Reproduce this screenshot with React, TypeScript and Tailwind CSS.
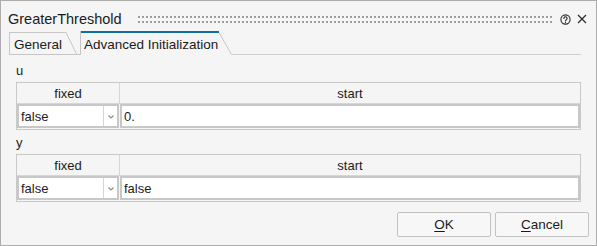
import React from 'react';

const HelpIcon = () => (
  <svg width="11" height="11" viewBox="0 0 11 11" className="block">
    <circle cx="5.5" cy="5.5" r="4.6" fill="none" stroke="#2a2a2a" strokeWidth="1.1" />
    <path d="M3.9 4.4 a1.6 1.6 0 1 1 2.5 1.3 c-0.6 0.35 -0.9 0.6 -0.9 1.2" fill="none" stroke="#2a2a2a" strokeWidth="1.1" strokeLinecap="round" />
    <circle cx="5.5" cy="8.3" r="0.65" fill="#2a2a2a" />
  </svg>
);

const CloseIcon = () => (
  <svg width="10" height="10" viewBox="0 0 10 10" className="block">
    <path d="M1 1 L9 9 M9 1 L1 9" stroke="#2a2a2a" strokeWidth="1.2" />
  </svg>
);

const Grip = () => (
  <svg height="8" className="block w-full">
    <defs>
      <pattern id="grip" width="4" height="8" patternUnits="userSpaceOnUse">
        <rect x="0" y="0" width="2" height="2" fill="#9d9d9d" />
        <rect x="0" y="5" width="2" height="2" fill="#9d9d9d" />
      </pattern>
    </defs>
    <rect width="100%" height="8" fill="url(#grip)" />
  </svg>
);

const Chevron = () => (
  <svg width="6" height="4" viewBox="0 0 6 4" className="block">
    <path d="M0.5 0.5 L3 3 L5.5 0.5" fill="none" stroke="#8c8c8c" strokeWidth="1.1" />
  </svg>
);

const VarTable = ({ value }: { value: string }) => (
  <div className="border border-[#c9c9c9] flex flex-col">
    <div className="grid grid-cols-[103px_1fr] h-[21px] border-b border-[#d6d6d6]">
      <div className="border-r border-[#d6d6d6] flex items-center justify-center">fixed</div>
      <div className="flex items-center justify-center">start</div>
    </div>
    <div className="flex gap-px h-[25px] pb-px">
      <div className="w-[102px] border-2 border-[#c8c8c8] bg-white flex">
        <div className="flex-1 flex items-center pl-[2px]">false</div>
        <div className="w-px bg-[#d4d4d4]" />
        <div className="w-[13px] flex items-center justify-center pt-px">
          <Chevron />
        </div>
      </div>
      <div className="flex-1 border-2 border-[#c8c8c8] bg-white flex items-center pl-[2px]">{value}</div>
    </div>
  </div>
);

export default function App() {
  return (
    <div className="w-[597px] h-[246px] bg-[#f5f5f5] border border-[#adadad] font-['Liberation_Sans',sans-serif] text-[13px] leading-[15px] text-[#1b1b1b] flex flex-col">
      {/* title bar */}
      <div className="h-[30px] flex items-center pl-[7px] pr-[9px] pt-[6px]">
        <span className="text-[14.5px] leading-[17px]">GreaterThreshold</span>
        <div className="flex-1 ml-[16px] mr-[7px] pt-[1px]">
          <Grip />
        </div>
        <div className="flex items-center gap-[6px]">
          <HelpIcon />
          <CloseIcon />
        </div>
      </div>

      {/* tabs */}
      <div className="h-[24px] flex items-end pl-[8px] pr-[15px] text-[13.5px]">
        <div className="flex h-[23px] border-b border-[#c6c6c6]">
          <div className="w-[57px] border-l border-t border-[#c6c6c6] flex items-center pl-[4px] pt-[1px]">General</div>
          <svg width="11" height="22" className="block">
            <path d="M0 0.5 L10.5 22" stroke="#c6c6c6" strokeWidth="1" fill="none" />
          </svg>
        </div>
        <div className="w-[3px] h-px bg-[#c6c6c6]" />
        <div className="flex h-[24px]">
          <div className="w-[139px] border-l border-[#c6c6c6] flex flex-col">
            <div className="h-[2px] bg-[#0f6fa6]" />
            <div className="flex-1 flex items-center pl-[3px]">Advanced Initialization</div>
          </div>
          <svg width="13" height="24" className="block">
            <path d="M0 1.5 L12.5 23.5" stroke="#c6c6c6" strokeWidth="1" fill="none" />
          </svg>
        </div>
        <div className="flex-1 h-px bg-[#d0d0d0]" />
      </div>

      {/* content */}
      <div className="flex flex-col px-[15px] pt-[8px]">
        <div>u</div>
        <div className="mt-[4px]">
          <VarTable value="0." />
        </div>
        <div className="mt-[5px]">y</div>
        <div className="mt-[4px]">
          <VarTable value="false" />
        </div>
      </div>

      {/* buttons */}
      <div className="flex justify-end gap-[4px] pr-[7px] mt-[10px] text-[13.5px]">
        <button className="w-[94px] h-[25px] border border-[#c2c2c2] rounded-[2px] bg-[#f7f7f7] flex items-center justify-center">
          <span><span className="underline underline-offset-2">O</span>K</span>
        </button>
        <button className="w-[94px] h-[25px] border border-[#c2c2c2] rounded-[2px] bg-[#f7f7f7] flex items-center justify-center">
          <span><span className="underline underline-offset-2">C</span>ancel</span>
        </button>
      </div>
    </div>
  );
}
